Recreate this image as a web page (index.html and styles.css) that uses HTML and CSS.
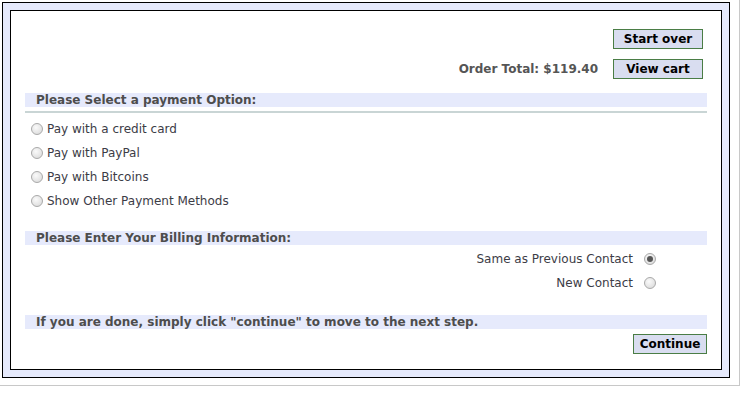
FILE: index.html
```html
<!DOCTYPE html>
<html lang="en">
<head>
    <meta charset="UTF-8">
    <meta name="viewport" content="width=device-width, initial-scale=1.0">
    <title>Checkout - Payment</title>
    <link rel="stylesheet" href="styles.css">
</head>
<body>
<div class="page">
    <div class="frame">
        <div class="panel">
            <!-- Top actions -->
            <div class="actions">
                <button class="btn">Start over</button>
                <div class="total-row">
                    <span class="total">Order Total: $119.40</span>
                    <button class="btn">View cart</button>
                </div>
            </div>

            <!-- Payment options -->
            <div class="bar bar-lined">Please Select a payment Option:</div>
            <div class="options">
                <label class="option"><input type="radio" name="pay"> Pay with a credit card</label>
                <label class="option"><input type="radio" name="pay"> Pay with PayPal</label>
                <label class="option"><input type="radio" name="pay"> Pay with Bitcoins</label>
                <label class="option"><input type="radio" name="pay"> Show Other Payment Methods</label>
            </div>

            <!-- Billing -->
            <div class="bar">Please Enter Your Billing Information:</div>
            <div class="contacts">
                <label class="contact">Same as Previous Contact <input type="radio" name="contact" checked></label>
                <label class="contact">New Contact <input type="radio" name="contact"></label>
            </div>

            <!-- Continue -->
            <div class="bar">If you are done, simply click "continue" to move to the next step.</div>
            <div class="continue-row">
                <button class="btn btn-continue">Continue</button>
            </div>
        </div>
    </div>
</div>
</body>
</html>
```

FILE: styles.css
```css
body {
    margin: 0;
    font-family: "DejaVu Sans", Verdana, sans-serif;
    background: #fff;
    color: #333;
}

.page {
    width: 728px;
    padding: 2px 9px 7px 2px;
    border-right: 1px solid #c8c8c8;
    border-bottom: 1px solid #c8c8c8;
}

.frame {
    border: 1px solid #000;
    background: #e6eafc;
    padding: 7px;
}

.panel {
    border: 1px solid #000;
    background: #fff;
    padding: 18px 14px 15px 14px;
}

.actions {
    display: flex;
    flex-direction: column;
    align-items: flex-end;
    gap: 10px;
    padding-right: 4px;
}

.total-row {
    display: flex;
    align-items: center;
    gap: 15px;
}

.total {
    font-size: 12px;
    font-weight: bold;
    color: #555;
}

.btn {
    width: 90px;
    height: 20px;
    padding: 0;
    border: 1px solid #4a7d45;
    background: #d9ddf0;
    font-family: "DejaVu Sans", Verdana, sans-serif;
    font-size: 12px;
    font-weight: bold;
    color: #000;
}

.btn-continue {
    width: 74px;
}

.bar {
    margin-top: 14px;
    height: 14px;
    line-height: 14px;
    padding-left: 11px;
    background: #e6eafc;
    font-size: 12px;
    font-weight: bold;
    color: #4d4d4d;
}

.bar-lined {
    position: relative;
}

.bar-lined::after {
    content: "";
    position: absolute;
    left: 0;
    right: 0;
    bottom: -6px;
    height: 2px;
    background: #c9d5d5;
}

.options {
    margin-top: 10px;
    margin-bottom: 18px;
    padding-left: 6px;
}

.option,
.contact {
    display: flex;
    align-items: center;
    height: 24px;
    font-size: 12px;
    color: #3c3c46;
}

.contacts {
    display: flex;
    flex-direction: column;
    align-items: flex-end;
    margin-top: 2px;
    margin-bottom: 20px;
    padding-right: 51px;
}

.contact {
    gap: 11px;
}

input[type="radio"] {
    appearance: none;
    -webkit-appearance: none;
    width: 12px;
    height: 12px;
    margin: 0 4px 0 0;
    border: 1px solid #a9a9a9;
    border-radius: 50%;
    background: radial-gradient(circle at 40% 35%, #fafafa, #d6d6d6);
    position: relative;
}

.contact input[type="radio"] {
    margin: 0;
}

input[type="radio"]:checked::after {
    content: "";
    position: absolute;
    left: 2px;
    top: 2px;
    width: 6px;
    height: 6px;
    border-radius: 50%;
    background: #555;
}

.continue-row {
    display: flex;
    justify-content: flex-end;
    margin-top: 5px;
}
```
